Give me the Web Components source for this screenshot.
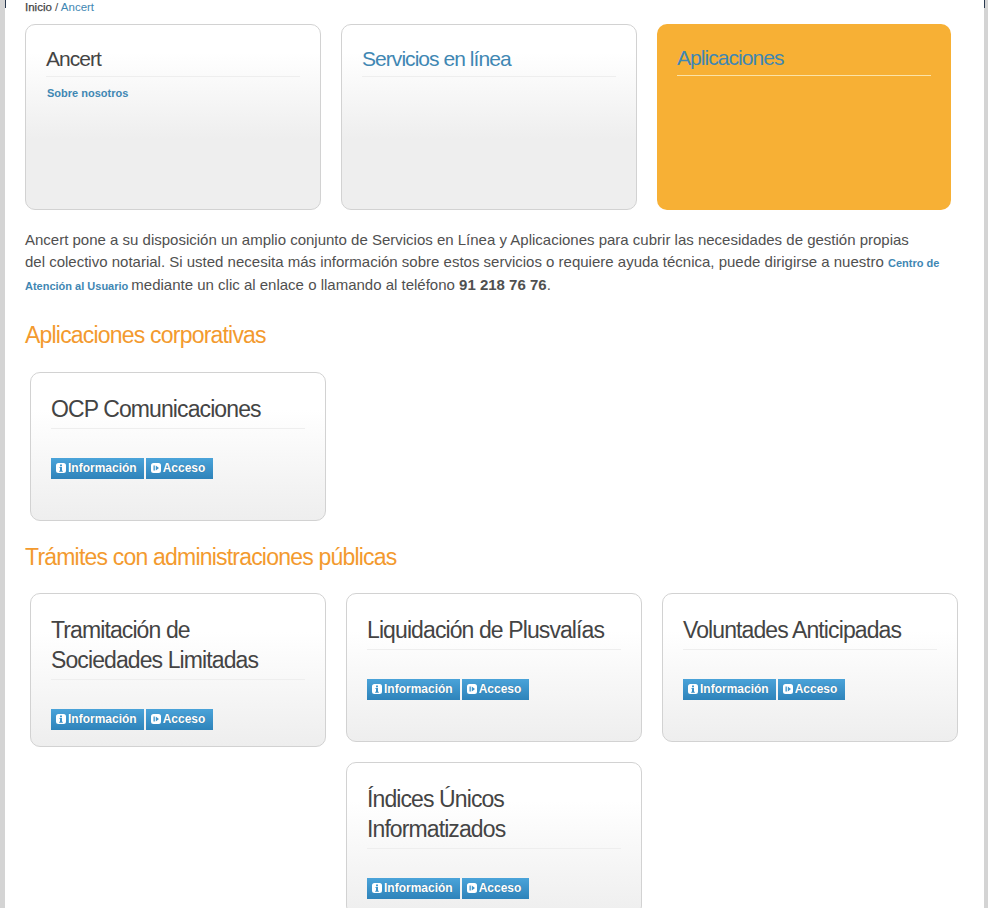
<!DOCTYPE html>
<html lang="es">
<head>
<meta charset="utf-8">
<title>Ancert</title>
<style>
  html, body { margin: 0; height: 908px; overflow: hidden; background: #fff; }
  body { font-family: "Liberation Sans", Arial, sans-serif; color: #444; }
</style>
</head>
<body>
<page-frame>
  <bread-crumbs><a-link slot="current">Ancert</a-link></bread-crumbs>

  <card-row variant="nav">
    <tile-card heading="Ancert" size="nav"><a-link bold>Sobre nosotros</a-link></tile-card>
    <tile-card heading="Servicios en línea" size="nav" link></tile-card>
    <tile-card heading="Aplicaciones" size="nav" link active></tile-card>
  </card-row>

  <intro-text>
    Ancert pone a su disposición un amplio conjunto de Servicios en Línea y Aplicaciones para cubrir las necesidades de gestión propias<br>del colectivo notarial. Si usted necesita más información sobre estos servicios o requiere ayuda técnica, puede dirigirse a nuestro <a-link bold>Centro de</a-link> <a-link bold>Atención al Usuario</a-link> mediante un clic al enlace o llamando al teléfono <b>91 218 76 76</b>.
  </intro-text>

  <section-title first>Aplicaciones corporativas</section-title>
  <card-row>
    <tile-card heading="OCP Comunicaciones"><button-pair></button-pair></tile-card>
  </card-row>

  <section-title>Trámites con administraciones públicas</section-title>
  <card-row>
    <tile-card heading="Tramitación de Sociedades Limitadas"><button-pair></button-pair></tile-card>
    <tile-card heading="Liquidación de Plusvalías"><button-pair></button-pair></tile-card>
    <tile-card heading="Voluntades Anticipadas"><button-pair></button-pair></tile-card>
    <tile-card heading="Índices Únicos Informatizados" style="grid-column: 2"><button-pair></button-pair></tile-card>
  </card-row>
</page-frame>

<script>
class PageFrame extends HTMLElement {
  constructor() {
    super();
    this.attachShadow({ mode: 'open' });
    this.shadowRoot.innerHTML = `
      <style>
        :host {
          display: block;
          position: relative;
          box-sizing: border-box;
          height: 908px;
          padding: 0 0 0 20px;
          background: #fff;
          border-left: 5px solid #d4d4d4;
          border-right: 4px solid #d4d4d4;
        }
        :host::before, :host::after {
          content: '';
          position: absolute;
          top: 0;
          width: 1px;
          height: 8px;
          background: #2a3a50;
        }
        :host::before { left: 0; }
        :host::after { right: -1px; }
      </style>
      <slot></slot>
    `;
  }
}
customElements.define('page-frame', PageFrame);

class BreadCrumbs extends HTMLElement {
  constructor() {
    super();
    this.attachShadow({ mode: 'open' });
    this.shadowRoot.innerHTML = `
      <style>
        :host {
          display: block;
          height: 16px;
          font-size: 11.5px;
          line-height: 15px;
          color: #444;
        }
        b { font-weight: normal; -webkit-text-stroke: 0.25px #444; }
      </style>
      <b>Inicio</b> / <slot name="current"></slot>
    `;
  }
}
customElements.define('bread-crumbs', BreadCrumbs);

class ALink extends HTMLElement {
  constructor() {
    super();
    this.attachShadow({ mode: 'open' });
    this.shadowRoot.innerHTML = `
      <style>
        :host { color: #3f87b3; }
        :host([bold]) { font-weight: bold; font-size: 11px; }
      </style>
      <slot></slot>
    `;
  }
}
customElements.define('a-link', ALink);

class CardRow extends HTMLElement {
  constructor() {
    super();
    this.attachShadow({ mode: 'open' });
    this.shadowRoot.innerHTML = `
      <style>
        :host {
          display: grid;
          grid-template-columns: repeat(3, 296px);
          column-gap: 20px;
          row-gap: 15px;
          align-items: start;
          margin-left: 5px;
        }
        :host([variant="nav"]) { margin: 8px 0 0; }
      </style>
      <slot></slot>
    `;
  }
}
customElements.define('card-row', CardRow);

class TileCard extends HTMLElement {
  constructor() {
    super();
    this.attachShadow({ mode: 'open' });
    const nav = this.getAttribute('size') === 'nav';
    this.shadowRoot.innerHTML = `
      <style>
        :host {
          display: block;
          box-sizing: border-box;
          min-height: 149px;
          padding: ${nav ? 19 : 21}px 20px 16px;
          border: 1px solid #d2d2d2;
          border-radius: 10px;
          background: ${nav
            ? 'linear-gradient(#fff 0%, #fff 15%, #eee 62%, #eee 100%)'
            : 'linear-gradient(#fff 0%, #fff 25%, #eee 100%)'};
        }
        :host([size="nav"]) { height: 186px; }
        :host([active]) {
          width: 294px;
          border: none;
          background: #f7b035;
        }
        h3 {
          margin: 0;
          padding-bottom: ${nav ? 2 : 4}px;
          border-bottom: 1px solid #eee;
          font-weight: normal;
          font-size: ${nav ? 21 : 23}px;
          line-height: 30px;
          letter-spacing: ${nav ? -0.95 : -0.9}px;
          color: #444;
        }
        :host([link]) h3 { color: #3f87b3; }
        :host([active]) h3 { border-bottom-color: #fbe3a8; }
        .body { padding: ${nav ? '6px 0 0 1px' : '29px 0 0'}; }
      </style>
      <h3>${this.getAttribute('heading')}</h3>
      <div class="body"><slot></slot></div>
    `;
  }
}
customElements.define('tile-card', TileCard);

class IntroText extends HTMLElement {
  constructor() {
    super();
    this.attachShadow({ mode: 'open' });
    this.shadowRoot.innerHTML = `
      <style>
        :host {
          display: block;
          width: 920px;
          margin-top: 19px;
          font-size: 15px;
          line-height: 22px;
          color: #505050;
        }
      </style>
      <slot></slot>
    `;
  }
}
customElements.define('intro-text', IntroText);

class SectionTitle extends HTMLElement {
  constructor() {
    super();
    this.attachShadow({ mode: 'open' });
    this.shadowRoot.innerHTML = `
      <style>
        :host {
          display: block;
          margin: 21px 0;
          font-size: 23px;
          line-height: 30px;
          letter-spacing: -0.8px;
          color: #f39a2e;
        }
        :host([first]) { margin: 23px 0 22px; }
      </style>
      <slot></slot>
    `;
  }
}
customElements.define('section-title', SectionTitle);

class ActionButton extends HTMLElement {
  constructor() {
    super();
    this.attachShadow({ mode: 'open' });
    const icon = this.getAttribute('icon');
    const hole = icon === 'info'
      ? 'M4 1.5h2v1.7H4zM3.5 4H6v3.7h.8v1H3.2v-1H4V5h-.5z'
      : 'M2.5 2.5h1.3v5H2.5zM4.8 2.5 8 5 4.8 7.5z';
    this.shadowRoot.innerHTML = `
      <style>
        :host {
          display: inline-flex;
          align-items: center;
          gap: 2px;
          height: 21px;
          padding: 0 ${icon === 'info' ? 7 : 8}px 2px 5px;
          box-sizing: border-box;
          background: linear-gradient(#4aa3d9, #2e83ba);
          color: #fff;
          font-size: 12px;
          font-weight: bold;
          text-shadow: 0 0 1px rgba(0,0,0,0.3);
        }
        svg { display: block; flex: none; margin-top: 1px; }
      </style>
      <svg width="10" height="10" viewBox="0 0 10 10">
        <path fill="#fff" fill-rule="evenodd" d="M2.5 0h5A2.5 2.5 0 0 1 10 2.5v5A2.5 2.5 0 0 1 7.5 10h-5A2.5 2.5 0 0 1 0 7.5v-5A2.5 2.5 0 0 1 2.5 0z${hole}"/>
      </svg>
      <slot></slot>
    `;
  }
}
customElements.define('action-button', ActionButton);

class ButtonPair extends HTMLElement {
  constructor() {
    super();
    this.attachShadow({ mode: 'open' });
    this.shadowRoot.innerHTML = `
      <style>
        :host { display: flex; gap: 2px; }
      </style>
      <action-button icon="info">Información</action-button>
      <action-button icon="play">Acceso</action-button>
    `;
  }
}
customElements.define('button-pair', ButtonPair);
</script>
</body>
</html>
